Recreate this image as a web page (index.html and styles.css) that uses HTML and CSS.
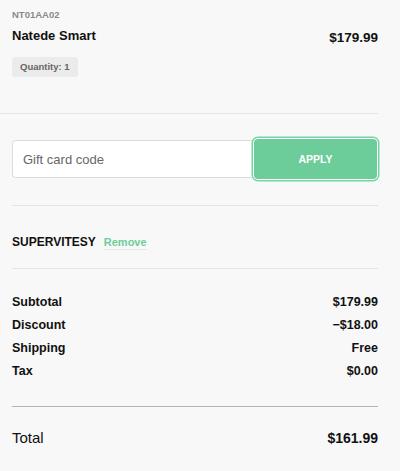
FILE: index.html
```html
<!DOCTYPE html>
<html>
<head>
<meta charset="utf-8">
<link rel="stylesheet" href="styles.css">
</head>
<body>
<div class="summary">
  <section class="product">
    <div class="sku">NT01AA02</div>
    <div class="product-row">
      <div class="name">Natede Smart</div>
      <div class="price">$179.99</div>
    </div>
    <span class="qty">Quantity: 1</span>
  </section>

  <section class="gift">
    <div class="gift-form">
      <input class="gift-input" type="text" placeholder="Gift card code">
      <button class="apply">APPLY</button>
    </div>
  </section>

  <section class="coupon">
    <span class="code">SUPERVITESY</span>
    <a class="remove">Remove</a>
  </section>

  <section class="lines">
    <div class="line"><span>Subtotal</span><span>$179.99</span></div>
    <div class="line"><span>Discount</span><span>−$18.00</span></div>
    <div class="line"><span>Shipping</span><span>Free</span></div>
    <div class="line"><span>Tax</span><span>$0.00</span></div>
  </section>

  <section class="total">
    <span class="total-label">Total</span>
    <span class="total-value">$161.99</span>
  </section>
</div>
</body>
</html>
```

FILE: styles.css
```css
* { box-sizing: border-box; }
html, body {
  margin: 0;
  padding: 0;
  background: #f8f8f8;
}
body {
  font-family: "Liberation Sans", Arial, sans-serif;
  color: #111;
  width: 400px;
  height: 471px;
  overflow: hidden;
}
.summary {
  width: 378px;
}
.product {
  display: flex;
  flex-direction: column;
  align-items: stretch;
  padding: 9px 0 36px 12px;
  border-bottom: 1px solid #e4e4e4;
}
.sku {
  font-size: 9.5px;
  font-weight: 700;
  line-height: 12px;
  color: #8a8a8a;
}
.product-row {
  display: flex;
  justify-content: space-between;
  align-items: flex-start;
  margin-top: 7px;
}
.name {
  font-size: 13px;
  font-weight: 700;
  line-height: 16px;
}
.price {
  font-size: 13.5px;
  font-weight: 700;
  line-height: 16px;
  margin-top: 2px;
}
.qty {
  align-self: flex-start;
  margin-top: 11px;
  height: 20px;
  line-height: 20px;
  padding: 0 8px;
  background: #ebebeb;
  border-radius: 3px;
  font-size: 9.5px;
  font-weight: 700;
  color: #666;
}
.gift {
  margin-left: 12px;
  padding: 26px 0 27px;
  border-bottom: 1px solid #e4e4e4;
}
.gift-form {
  display: flex;
  align-items: center;
  height: 38px;
}
.gift-input {
  flex: 1;
  height: 38px;
  margin: 0;
  border: 1px solid #dcdcdc;
  border-right: none;
  border-radius: 4px 0 0 4px;
  background: #fff;
  padding: 0 10px;
  font-family: "Liberation Sans", Arial, sans-serif;
  font-size: 13px;
  color: #111;
  outline: none;
}
.gift-input::placeholder {
  color: #666;
}
.apply {
  width: 123px;
  height: 40px;
  margin: 0 1px 0 0;
  border: none;
  border-radius: 4px;
  background: #6ccd9b;
  color: #fff;
  font-family: "Liberation Sans", Arial, sans-serif;
  font-size: 10.5px;
  font-weight: 700;
  box-shadow: 0 0 0 1px #fff, 0 0 0 2.5px #77d4a4;
}
.coupon {
  margin-left: 12px;
  padding: 28px 0 18px;
  border-bottom: 1px solid #e4e4e4;
  display: flex;
  align-items: center;
  height: 63px;
}
.code {
  font-size: 12px;
  font-weight: 700;
  line-height: 16px;
}
.remove {
  margin-left: 8px;
  font-size: 11px;
  font-weight: 700;
  line-height: 14px;
  color: #6ccd9b;
  border-bottom: 1px solid #e8e8e8;
}
.lines {
  margin-left: 12px;
  padding: 22px 0 23px;
  border-bottom: 1px solid #b4b4b4;
}
.line {
  display: flex;
  justify-content: space-between;
  font-size: 12.5px;
  font-weight: 700;
  line-height: 23px;
}
.total {
  margin-left: 12px;
  padding-top: 21px;
  display: flex;
  justify-content: space-between;
  align-items: center;
  line-height: 20px;
}
.total-label {
  font-size: 15px;
}
.total-value {
  font-size: 14px;
  font-weight: 700;
}
```
